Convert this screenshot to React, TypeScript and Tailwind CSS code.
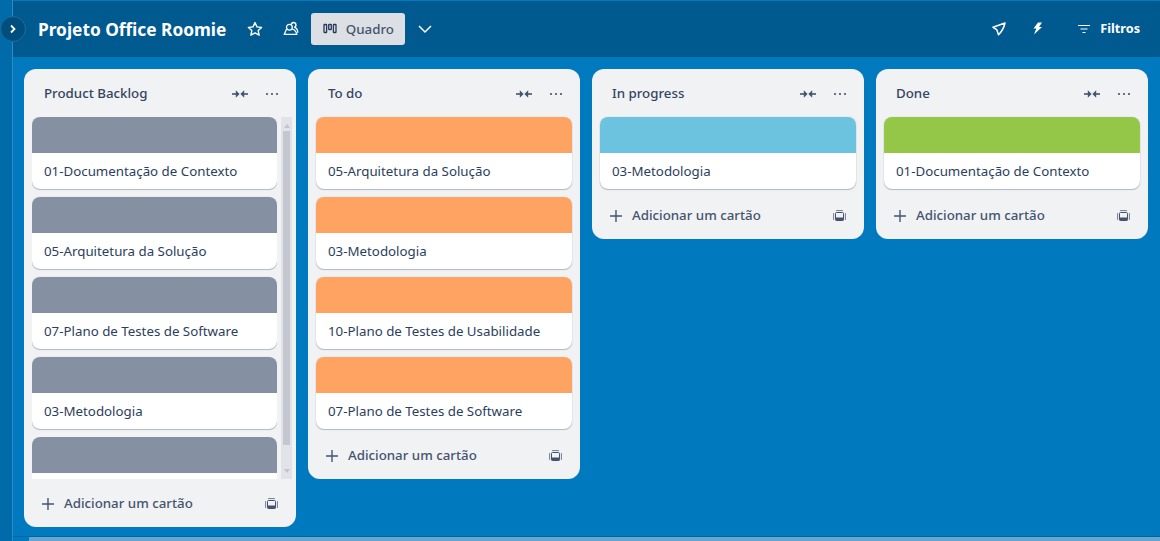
import React from "react";

function Compress() {
  return (
    <svg width="16" height="14" viewBox="0 0 16 14" fill="currentColor">
      <rect x="0" y="6.2" width="4.5" height="1.6" />
      <path d="M3.8 3.2 7.6 7l-3.8 3.8z" />
      <rect x="11.5" y="6.2" width="4.5" height="1.6" />
      <path d="M12.2 3.2 8.4 7l3.8 3.8z" />
    </svg>
  );
}

function Dots() {
  return (
    <svg width="14" height="16" viewBox="0 0 14 16" fill="currentColor">
      <circle cx="2" cy="8" r="1.1" />
      <circle cx="7" cy="8" r="1.1" />
      <circle cx="12" cy="8" r="1.1" />
    </svg>
  );
}

function TemplateIcon() {
  return (
    <svg width="13" height="13" viewBox="0 0 13 13" fill="none" stroke="currentColor" strokeWidth="1">
      <path d="M.6 3.5v6M3.5.6h6M12.4 3.5v6" strokeLinecap="round" opacity=".75" />
      <rect x="2.5" y="2.5" width="8" height="8" rx="1" />
      <rect x="2.5" y="7.5" width="8" height="3" fill="currentColor" stroke="none" />
    </svg>
  );
}

function Card({ title, cover }: { title: string; cover: string }) {
  return (
    <div className="shrink-0 overflow-hidden rounded-lg bg-white shadow-[0_1px_1px_#091e4240,0_0_1px_#091e424f]">
      <div className={`h-9 ${cover}`} />
      <div className="flex h-9 items-center px-3 pt-[2px] text-[13.3px] text-[#2c3e5d]">{title}</div>
    </div>
  );
}

function AddRow() {
  return (
    <div className="flex h-12 shrink-0 items-center justify-between pl-[18px] pr-[18px] pt-[2px] text-[#44546f]">
      <div className="flex items-center gap-[10px]">
        <svg width="12" height="12" viewBox="0 0 12 12" stroke="currentColor" strokeWidth="1.4">
          <path d="M6 0v12M0 6h12" />
        </svg>
        <span className="text-[13.3px] font-medium">Adicionar um cartão</span>
      </div>
      <TemplateIcon />
    </div>
  );
}

function List({
  title,
  cover,
  cards,
  scroll,
}: {
  title: string;
  cover: string;
  cards: string[];
  scroll?: boolean;
}) {
  return (
    <div className={`flex w-[272px] shrink-0 flex-col rounded-xl bg-[#f1f2f4] ${scroll ? "h-[458px]" : ""}`}>
      <div className="flex h-12 shrink-0 items-center justify-between pl-5 pr-[17px] pt-[2px] text-[#44546f]">
        <span className="text-[13.3px] font-medium text-[#344563]">{title}</span>
        <div className="flex items-center gap-[17px]">
          <Compress />
          <Dots />
        </div>
      </div>
      {scroll ? (
        <div className="flex min-h-0 flex-1 pl-2 pr-1">
          <div className="flex min-w-0 flex-1 flex-col gap-2 overflow-hidden">
            {cards.map((c) => (
              <Card key={c} title={c} cover={cover} />
            ))}
            <div className="shrink-0 overflow-hidden rounded-t-lg bg-white">
              <div className={`h-9 ${cover}`} />
              <div className="h-9" />
            </div>
          </div>
          <div className="ml-[4px] flex w-[11px] flex-col items-center bg-[#e2e3e8] pt-[7px]">
            <div className="mb-[3px] h-0 w-0 border-x-[3px] border-b-[4px] border-x-transparent border-b-[#c1c4cc]" />
            <div className="h-[314px] w-[7px] bg-[#c4c7d0]" />
            <div className="mt-auto mb-[6px] h-0 w-0 border-x-[3px] border-t-[4px] border-x-transparent border-t-[#c1c4cc]" />
          </div>
        </div>
      ) : (
        <div className="flex flex-col gap-2 px-2 pb-[2px]">
          {cards.map((c) => (
            <Card key={c} title={c} cover={cover} />
          ))}
        </div>
      )}
      <AddRow />
    </div>
  );
}

export default function App() {
  return (
    <div
      className="flex h-[541px] w-[1160px] overflow-hidden bg-[#0079bf] text-[#172b4d]"
      style={{ fontFamily: '"Noto Sans", sans-serif' }}
    >
      <div className="relative w-[13px] shrink-0 border-r border-[#2c8ac4] bg-[#006ba8]" />
      <div className="absolute left-0 top-[16px] flex h-[26px] w-[26px] items-center justify-center rounded-full border border-[#1a6e9f] bg-[#004e7d] text-white">
        <svg width="8" height="10" viewBox="0 0 8 10" fill="none" stroke="currentColor" strokeWidth="1.8">
          <path d="M2 1.5 5.5 5 2 8.5" />
        </svg>
      </div>
      <div className="flex min-w-0 flex-1 flex-col">
        <div className="mt-[1px] flex h-[56px] shrink-0 items-center bg-[#005a8f] text-white">
          <span className="ml-[25px] pt-[2px] text-[17.3px] font-bold">Projeto Office Roomie</span>
          <svg className="ml-[21px]" width="16" height="16" viewBox="0 0 16 16" fill="none" stroke="currentColor" strokeWidth="1.4">
            <path d="M8 1.6 10 5.9l4.6.6-3.4 3.1.9 4.6L8 11.9l-4.1 2.3.9-4.6L1.4 6.5 6 5.9z" strokeLinejoin="round" />
          </svg>
          <svg className="ml-[20px]" width="16" height="16" viewBox="0 0 16 16" fill="none" stroke="currentColor" strokeWidth="1.3">
            <circle cx="6.4" cy="6.2" r="2.9" />
            <path d="M8.2 3.6a2.4 2.4 0 1 1 3 2.6M11.2 6.2c2 .6 3.6 2.6 3.6 5.6" />
            <path d="M3.6 8 1.2 13.4h12.6c-.5-2.6-2-4.6-4.6-5.4" strokeLinejoin="round" />
          </svg>
          <div className="ml-[12px] flex h-8 w-[94px] items-center justify-center gap-[9px] rounded-[3px] bg-[#dcdfe4] text-[#44546f]">
            <svg width="14" height="12" viewBox="0 0 14 12" fill="none" stroke="#253858" strokeWidth="1.3">
              <rect x="1" y="1.5" width="2.6" height="8" rx=".6" />
              <rect x="5.7" y="1.5" width="2.6" height="5" rx=".6" />
              <rect x="10.4" y="1.5" width="2.6" height="8" rx=".6" />
            </svg>
            <span className="pt-[2px] text-[13.3px] font-medium">Quadro</span>
          </div>
          <svg className="ml-[12px]" width="16" height="16" viewBox="0 0 16 16" fill="none" stroke="currentColor" strokeWidth="1.5">
            <path d="M2 5l6 6 6-6" />
          </svg>
          <div className="ml-auto flex items-center">
            <svg className="ml-0" width="14" height="14" viewBox="0 0 14 14" fill="none" stroke="currentColor" strokeWidth="1.5">
              <path d="M13 1 1 5.3l3.7 2.3L6.5 12.8C9.5 9.8 12 5.5 13 1z" strokeLinejoin="round" />
            </svg>
            <svg className="ml-[26px]" width="11" height="13" viewBox="0 0 11 13" fill="currentColor">
              <path d="M6 .5 1.5 6.5h2.8L2 12.5 10 5H7l3-4.5z" />
            </svg>
            <svg className="ml-[35px]" width="12" height="10" viewBox="0 0 12 10" fill="none" stroke="currentColor" strokeWidth="1.2">
              <path d="M0 1.5h12M2.5 5h7M4.5 8.5h3" />
            </svg>
            <span className="ml-[10px] mr-[20px] text-[12.7px] font-bold">Filtros</span>
          </div>
        </div>
        <div className="flex flex-1 items-start gap-3 pl-[11px] pt-3">
          <List
            title="Product Backlog"
            cover="bg-[#8590a2]"
            scroll
            cards={[
              "01-Documentação de Contexto",
              "05-Arquitetura da Solução",
              "07-Plano de Testes de Software",
              "03-Metodologia",
            ]}
          />
          <List
            title="To do"
            cover="bg-[#fea362]"
            cards={[
              "05-Arquitetura da Solução",
              "03-Metodologia",
              "10-Plano de Testes de Usabilidade",
              "07-Plano de Testes de Software",
            ]}
          />
          <List title="In progress" cover="bg-[#6cc3e0]" cards={["03-Metodologia"]} />
          <List title="Done" cover="bg-[#94c748]" cards={["01-Documentação de Contexto"]} />
        </div>
        <div className="flex h-[5px] shrink-0 border-t border-[#00669f] pl-[16px]">
          <div className="h-full flex-1 bg-[#66a6cf]" />
        </div>
      </div>
    </div>
  );
}
